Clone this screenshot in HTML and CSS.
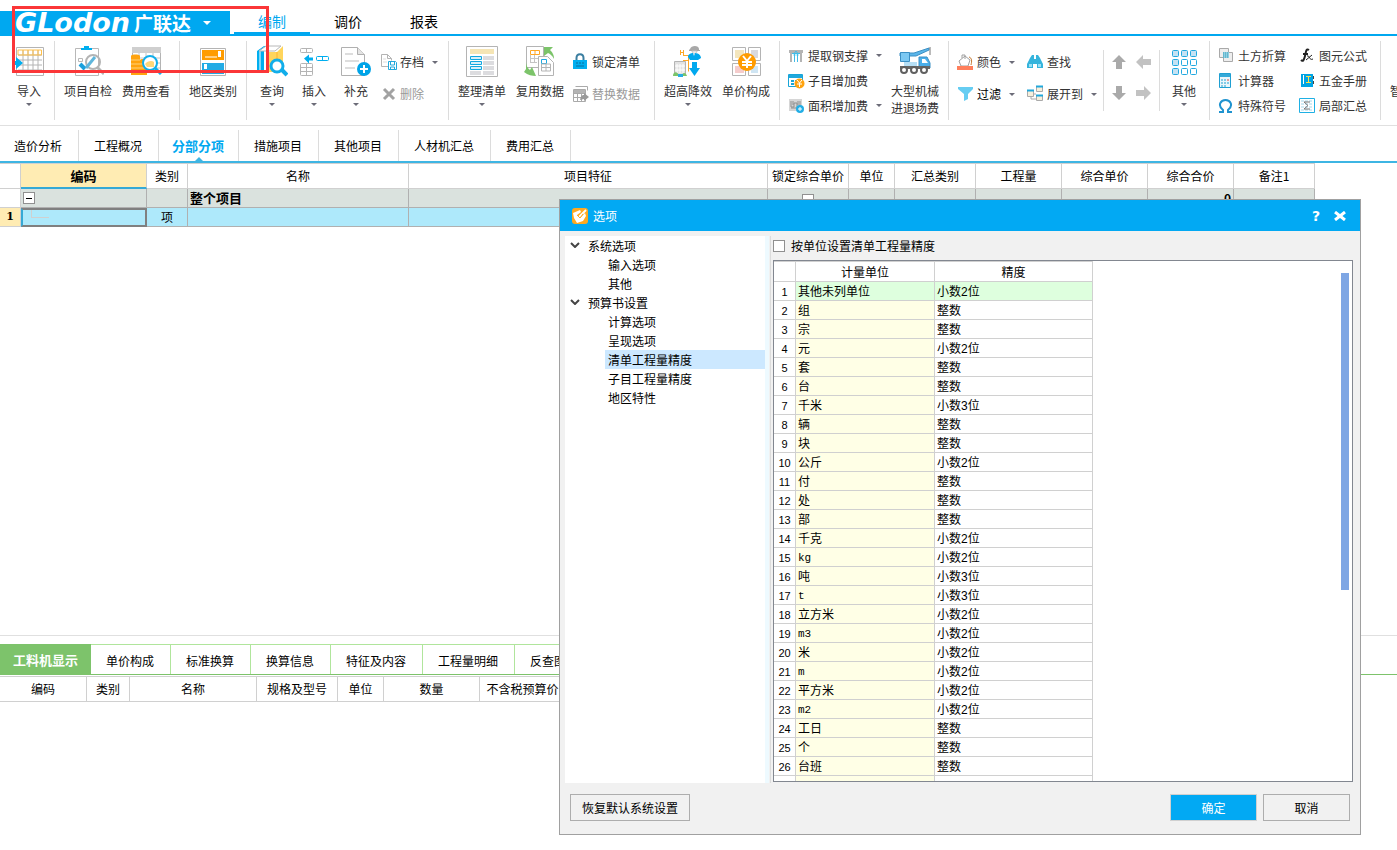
FILE: index.html
```
<!DOCTYPE html>
<html lang="zh-CN">

<head>
    <meta charset="UTF-8">
    <meta name="viewport" content="width=device-width, initial-scale=1.0">
    <title>广联达计价</title>
    <link rel="stylesheet" href="styles.css">
</head>

<body>
    <header class="titlebar">
        <button class="logo"><span class="logo-en">GLodon</span><span class="logo-cn">广联达</span><i class="arrow white"></i></button>
        <nav class="menu">
            <a href="#" class="on">编制</a>
            <a href="#">调价</a>
            <a href="#">报表</a>
        </nav>
    </header>

    <div class="ribbon">
        <div class="group first">
            <button class="big narrow">
                <svg width="32" height="32" viewBox="0 0 32 32" fill="none">
                    <path d="M3.500 2.500h27v28h-27z" stroke="#b4b4b4" fill="#fff" />
                    <path d="M5 10h24M5 15h24M5 20h24M5 25h24M10 5v23M15 5v23M20 5v23M25 5v23" stroke="#b4b4b4" />
                    <path d="M5 5h23.500v5H5zM10 5v5M15 5v5M20 5v5M25 5v5" stroke="#ffc04a" />
                    <path d="M0 16h3v-4l7 6-7 6v-4H0z" fill="#00aeef" />
                </svg>
                <span>导入</span><i class="arrow"></i>
            </button>
        </div>
        <div class="group">
            <button class="big">
                <svg width="32" height="32" viewBox="0 0 32 32" fill="none">
                    <path d="M3.500 3.500h23v27h-23z" stroke="#b8b8b8" fill="#fff" />
                    <path d="M9 5V3h3V1h5v2h3v2z" fill="#00aeef" />
                    <circle cx="21" cy="17" r="7" stroke="#b4b4b4" stroke-width="2" />
                    <path d="M25 22l7 7" stroke="#b4b4b4" stroke-width="3" />
                    <path d="M6.500 13.500h4v3h-4z" stroke="#b8b8b8" />
                    <path d="M8 19l5 5" stroke="#1a9fdc" stroke-width="4" />
                    <path d="M14 23l9-11" stroke="#5fb6dc" stroke-width="3" />
                </svg>
                <span>项目自检</span>
            </button>
            <button class="big">
                <svg width="32" height="32" viewBox="0 0 32 32" fill="none">
                    <path d="M2.500 2.500h28v24h-28z" stroke="#b4b4b4" fill="#fff" />
                    <path d="M2 2h29v6H2z" fill="#cfcfcf" />
                    <path d="M3 13h27M3 18h27M3 23h27M9 8v18M16 8v18M23 8v18" stroke="#c4c4c4" />
                    <path d="M1 11c0-2 9-2 9 0v4c1-2 7-1 7 1v14H1z" fill="#ffa30f" />
                    <path d="M1 15h9M1 19h16M1 23h16M1 27h16" stroke="#ffd27a" />
                    <circle cx="20" cy="18" r="7" fill="#fff" stroke="#12aeea" stroke-width="2" />
                    <path d="M15 19c2-3 7-4 9-2v5h-7z" fill="#ffd679" />
                    <path d="M25 23l6 6" stroke="#12aeea" stroke-width="3" />
                </svg>
                <span>费用查看</span>
            </button>
        </div>
        <div class="group">
            <button class="big">
                <svg width="32" height="32" viewBox="0 0 32 32" fill="none">
                    <path d="M3.500 3.500h25v27h-25z" stroke="#b4b4b4" fill="#fff" />
                    <path d="M5 5h22v10H5z" fill="#ff9c00" />
                    <path d="M5 18h22v11H5z" fill="#22abe5" />
                    <path d="M8 12h12M12 26h12" stroke="#fff" />
                    <path d="M21 6h3v6h-3zM7 19h3v5H7z" fill="#fff" />
                </svg>
                <span>地区类别</span>
            </button>
        </div>
        <div class="group">
            <button class="big narrow">
                <svg width="32" height="32" viewBox="0 0 32 32" fill="none">
                    <path d="M1 6l7-5h4l-4 5v20H1z" fill="#00aeef" />
                    <path d="M4 6v19" stroke="#fff" />
                    <path d="M3 6l7-5h15l-6 5z" fill="#fff" stroke="#b8b8b8" />
                    <path d="M11 7h10l6-6v20l-6 6H11z" fill="#ffd55c" />
                    <path d="M21 7v20" stroke="#ffb52e" />
                    <circle cx="21" cy="21" r="6" fill="#fff" stroke="#12aeea" stroke-width="3" />
                    <path d="M26 25l5 5" stroke="#12aeea" stroke-width="4" />
                </svg>
                <span>查询</span><i class="arrow"></i>
            </button>
            <button class="big narrow">
                <svg width="32" height="32" viewBox="0 0 32 32" fill="none">
                    <rect x="2.500" y="3.500" width="12" height="4" rx="1" stroke="#b4b4b4" />
                    <path d="M8.500 4v4" stroke="#b4b4b4" />
                    <rect x="2.500" y="18.500" width="12" height="12" rx="1" stroke="#b4b4b4" />
                    <path d="M8.500 18v13M2 22.500h12M2 26.500h12" stroke="#b4b4b4" />
                    <path d="M6 13.500l5-4v3h4v3h-4v3z" fill="#00aeef" />
                    <rect x="18.500" y="11.500" width="12" height="4" rx="1" stroke="#00aeef" />
                    <path d="M24.500 12v4" stroke="#00aeef" />
                </svg>
                <span>插入</span><i class="arrow"></i>
            </button>
            <button class="big narrow">
                <svg width="32" height="32" viewBox="0 0 32 32" fill="none">
                    <path d="M1.500 2.500h16l7 7v21h-23z" stroke="#b0b0b0" fill="#fff" />
                    <path d="M17.500 2.500v7h7" stroke="#b0b0b0" fill="#e4e4e4" />
                    <path d="M5 9h8M5 16h14M5 23h10" stroke="#ddd" stroke-width="2" />
                    <circle cx="24" cy="24" r="7" fill="#00a4e8" />
                    <path d="M24 20v8M20 24h8" stroke="#fff" stroke-width="2" />
                </svg>
                <span>补充</span><i class="arrow"></i>
            </button>
            <div class="col save">
                <button class="small">
                    <svg width="18" height="18" viewBox="0 0 18 18" fill="none">
                        <path d="M9 13.500H1.500v-12h6l4 4v2M7.500 1.500v4h4" stroke="#b4b4b4" />
                        <path d="M3 6h3M3 9h4" stroke="#ddd" />
                        <path d="M8.500 8.500h7l1 1v7h-8zM10.500 9v3h4V9M10.500 16v-2h4v2" stroke="#22a9dd" />
                    </svg>
                    <span>存档</span><i class="arrow"></i>
                </button>
                <button class="small" disabled>
                    <svg width="18" height="18" viewBox="0 0 18 18">
                        <path d="M4 4l10 10M14 4L4 14" stroke="#a2a2a2" stroke-width="3" />
                    </svg>
                    <span>删除</span>
                </button>
            </div>
        </div>
        <div class="group">
            <button class="big">
                <svg width="32" height="32" viewBox="0 0 32 32" fill="none">
                    <path d="M0.500 1.500h31v30h-31z" stroke="#b4b4b4" fill="#fff" />
                    <path d="M4 4h24v5H4z" fill="#f5e5b5" />
                    <path d="M17 11h11v4H17zM17 16h11v4H17zM17 21h11v4H17zM17 26h11v4H17zM4 26h11v4H4z" fill="#dcdcdf" />
                    <path d="M4.500 11.500h11v3h-11zM4.500 16.500h11v3h-11zM4.500 21.500h11v3h-11z" stroke="#12a8e0" fill="#d8eef8" />
                </svg>
                <span>整理清单</span><i class="arrow"></i>
            </button>
            <button class="big">
                <svg width="32" height="32" viewBox="0 0 32 32" fill="none">
                    <path d="M2.500 1.500h17v21h-17z" stroke="#b4b4b4" fill="#fff" />
                    <path d="M6.500 5.500h9v4h-9zM11 5v5" stroke="#ffa827" />
                    <path d="M6 13.500h8M6 17.500h7M6.500 10v8M10.500 10v8" stroke="#c4c4c4" />
                    <path d="M14.500 11.500h9l6 6v13h-15z" stroke="#b4b4b4" fill="#fff" />
                    <path d="M17.500 14.500h5v4h-5z" stroke="#22a9e0" />
                    <path d="M17.500 19v7h9v-7zM17 22.500h9M22 19v7" stroke="#b4b4b4" />
                    <path d="M20 2h9l-3 3c3 3 4 5 4 9-2-4-4-5-6-6l-4 3zM2 16v8l-2 3c4 3 8 4 12 4l-4-9-2 3c-3-2-4-5-4-9z" fill="#7cc46a" />
                </svg>
                <span>复用数据</span>
            </button>
            <div class="col lock">
                <button class="small">
                    <svg width="18" height="18" viewBox="0 0 18 18" fill="none">
                        <path d="M4.500 8V5c0-5 7-5 7 0v3" stroke="#3b7ea0" stroke-width="2" />
                        <path d="M1 7h14v9H1z" fill="#00aeef" />
                        <path d="M4 10h2M7 10h2M10 10h2M4 13h8" stroke="#0a6f9c" />
                    </svg>
                    <span>锁定清单</span>
                </button>
                <button class="small" disabled>
                    <svg width="18" height="18" viewBox="0 0 18 18" fill="none">
                        <path d="M3.500 1.500h12v4M1.500 4.500h12v12h-12zM1 8.500h13M1 12.500h12M5.500 7v10M9.500 7v10" stroke="#aaa" />
                        <path d="M2 5h11v3H2z" fill="#b4b4b4" />
                        <path d="M8 15c1-5 3-5 4-5V8l5 4-5 4v-2z" fill="#999" />
                    </svg>
                    <span>替换数据</span>
                </button>
            </div>
        </div>
        <div class="group">
            <button class="big">
                <svg width="32" height="32" viewBox="0 0 32 32" fill="none">
                    <path d="M8.500 5v5M11.500 5v5M8 7.500h3M11 10.500h5.500v16M11 15.500h5" stroke="#ffa827" />
                    <path d="M2.500 16.500h11v14h-11z" stroke="#b4b4b4" fill="#e2e2e2" />
                    <path d="M5 19v9M8 19v9M11 19v9M3 21h10M3 25h10" stroke="#fff" />
                    <path d="M1 31c0-5 5-5 6 0M10 31c0-4 4-4 5 0" fill="#7cc46a" />
                    <path d="M6 29h5v3H6z" fill="#2aaee4" />
                    <path d="M18 4c1-4 9-4 9 0v1h1v1H17V5z" fill="#a8a8a8" />
                    <path d="M20 6h5c0 3-5 3-5 0z" fill="#fff" stroke="#c0c0c0" />
                    <path d="M16 12c0-3 3-4 5-4l1 3 1-3c4 0 6 3 6 5l-3 2h-8z" fill="#00a8ee" />
                    <path d="M20 17h5v6h3l-5.500 8L17 23h3z" fill="#00a8ee" />
                </svg>
                <span>超高降效</span><i class="arrow"></i>
            </button>
            <button class="big">
                <svg width="32" height="32" viewBox="0 0 32 32" fill="none">
                    <path d="M2.500 2.500h13v13h-13zM18.500 2.500h12v13h-12zM2.500 18.500h13v12h-13zM18.500 18.500h12v12h-12z" stroke="#b4b4b4" fill="#fff" />
                    <path d="M5 5h9v8H5z" fill="#f4e6bd" />
                    <path d="M21 5h7v8h-7z" fill="#d9d9de" />
                    <path d="M5 21h9v7H5z" fill="#f5cccc" />
                    <path d="M21 21h7v7h-7z" fill="#cfe5f3" />
                    <circle cx="17" cy="17" r="9" fill="#ff9c00" />
                    <path d="M13 11l4 5 4-5M17 16v7M12 17h10M12 20h10" stroke="#fff" stroke-width="2" />
                </svg>
                <span>单价构成</span>
            </button>
        </div>
        <div class="group">
            <div class="col three fees">
                <button class="small">
                    <svg width="18" height="18" viewBox="0 0 18 18" fill="none">
                        <path d="M1 3h14v3h-1v9h-2V6H4v9H2V6H1z" fill="#b4b4b4" />
                        <path d="M5 6h6v3H5z" fill="#c8eefa" />
                        <path d="M6.500 15V6l1.500-2 1.500 2v9M4 6.500h8" stroke="#42bce8" />
                    </svg>
                    <span>提取钢支撑</span><i class="arrow"></i>
                </button>
                <button class="small">
                    <svg width="18" height="18" viewBox="0 0 18 18" fill="none">
                        <path d="M.5 2.500h14v12H.5z" stroke="#18a5d8" fill="#fff" />
                        <path d="M1 3h13v3H1z" fill="#20a8dc" />
                        <path d="M3 9h3M7 9h3M3 12h3" stroke="#18a5d8" stroke-width="2" />
                        <circle cx="11.500" cy="11.500" r="5" fill="#ffa30f" />
                        <path d="M9 8l2.500 3L14 8M11.500 11v4M9 12h5" stroke="#fff" />
                    </svg>
                    <span>子目增加费</span>
                </button>
                <button class="small">
                    <svg width="18" height="18" viewBox="0 0 18 18" fill="none">
                        <path d="M1 2h13v12H1z" fill="#d6d6d6" />
                        <path d="M3 4v6h3V6h3v4h3V4M3 11h8M5 4v4M10 4v4" stroke="#8e8e8e" />
                        <circle cx="12" cy="12" r="4" fill="#22aee6" />
                        <path d="M12 10v4M10 12h4" stroke="#fff" />
                    </svg>
                    <span>面积增加费</span><i class="arrow"></i>
                </button>
            </div>
            <button class="big">
                <svg width="32" height="32" viewBox="0 0 32 32" fill="none">
                    <path d="M1 8h14l15-5v2L17 11H1z" fill="#5ab6ea" stroke="#3b8fc4" />
                    <path d="M1.500 7.500h9v9h-9z" fill="#7cc8f2" stroke="#3b8fc4" />
                    <path d="M31 2v8" stroke="#777" />
                    <path d="M20 12h8l3 6v5H20z" fill="#4aaeea" stroke="#3b8fc4" />
                    <path d="M23 14h3l3 4h-6z" fill="#fff" />
                    <path d="M5 17h13v4H5z" fill="#b6dff5" />
                    <path d="M1 21h30v3H1z" fill="#666" />
                    <circle cx="5" cy="25" r="3" fill="#fff" stroke="#606060" stroke-width="2" />
                    <circle cx="15" cy="25" r="3" fill="#fff" stroke="#606060" stroke-width="2" />
                    <circle cx="25" cy="25" r="3" fill="#fff" stroke="#606060" stroke-width="2" />
                </svg>
                <span>大型机械<br>进退场费</span>
            </button>
        </div>
        <div class="group">
            <div class="col color">
                <button class="small">
                    <svg width="18" height="18" viewBox="0 0 18 18" fill="none">
                        <path d="M2 8l6-5 5 4-2 6H4z" stroke="#a0a0a0" fill="#fff" />
                        <path d="M5 5V2h3v4" stroke="#a0a0a0" />
                        <path d="M12 4c3 1 3 4 2 8" stroke="#c5762c" />
                        <path d="M0 13h16v4H0z" fill="#ff7f5c" />
                    </svg>
                    <span>颜色</span><i class="arrow"></i>
                </button>
                <button class="small dark">
                    <svg width="18" height="18" viewBox="0 0 18 18">
                        <path d="M1 2h15v2l-5 5v5l-4 2V9L1 4z" fill="#66cdf2" />
                    </svg>
                    <span>过滤</span><i class="arrow"></i>
                </button>
            </div>
            <div class="col find">
                <button class="small">
                    <svg width="18" height="18" viewBox="0 0 18 18">
                        <path d="M3 5l2-3h2v4h2V2h2l2 3 3 6v4h-6v-4H6v4H0v-4z" fill="#35b4dc" />
                        <path d="M2 11h3v3H2zM11 11h3v3h-3z" fill="#9be0f5" />
                    </svg>
                    <span>查找</span>
                </button>
                <button class="small">
                    <svg width="18" height="18" viewBox="0 0 18 18" fill="none">
                        <path d="M.5 5.500h6v6h-6zM9.500 1.500h6v5h-6zM9.500 10.500h6v5h-6z" stroke="#aaa" fill="#f6efdc" />
                        <path d="M0 5.500h7M9 1.500h7M9 10.500h7" stroke="#20a8dc" stroke-width="2" />
                        <path d="M7 9h2M4 12v2h5" stroke="#aaa" />
                    </svg>
                    <span>展开到</span><i class="arrow"></i>
                </button>
            </div>
            <div class="moves">
                <button aria-label="上移"><svg width="16" height="16" viewBox="0 0 16 16"><path d="M8 1l7 7h-4v7H5V8H1z" fill="#aaa" /></svg></button>
                <button aria-label="升级"><svg width="16" height="16" viewBox="0 0 16 16"><path d="M0 8l7-7v4h8v6H7v4z" fill="#c2c2c2" /></svg></button>
                <button aria-label="下移"><svg width="16" height="16" viewBox="0 0 16 16"><path d="M8 15l7-7h-4V1H5v7H1z" fill="#aaa" /></svg></button>
                <button aria-label="降级"><svg width="16" height="16" viewBox="0 0 16 16"><path d="M15 8L8 1v4H0v6h8v4z" fill="#c2c2c2" /></svg></button>
            </div>
            <button class="big narrow">
                <svg width="32" height="32" viewBox="0 0 32 32" fill="#fff" stroke="#22a9e0">
                    <g fill="#c5e2f3">
                        <rect x="4.500" y="5.500" width="6" height="6" rx="1" />
                        <rect x="13.500" y="5.500" width="6" height="6" rx="1" />
                        <rect x="22.500" y="5.500" width="6" height="6" rx="1" />
                        <rect x="4.500" y="14.500" width="6" height="6" rx="1" />
                        <rect x="4.500" y="23.500" width="6" height="6" rx="1" />
                    </g>
                    <rect x="13.500" y="14.500" width="6" height="6" rx="1" />
                    <rect x="22.500" y="14.500" width="6" height="6" rx="1" />
                    <rect x="13.500" y="23.500" width="6" height="6" rx="1" />
                    <rect x="22.500" y="23.500" width="6" height="6" rx="1" />
                </svg>
                <span>其他</span><i class="arrow"></i>
            </button>
        </div>
        <div class="group">
            <div class="col three tools">
                <button class="small">
                    <svg width="18" height="18" viewBox="0 0 18 18" fill="none">
                        <path d="M1.500 1.500h9v9h-9zM5.500 5.500h9v9h-9z" stroke="#a9a9a9" fill="#eee" />
                        <path d="M5 5h6v6H5z" fill="#8fd0e2" />
                        <path d="M5 6h6M5 8h6M5 10h6" stroke="#3b9dba" stroke-dasharray="1 1" />
                    </svg>
                    <span>土方折算</span>
                </button>
                <button class="small">
                    <svg width="18" height="18" viewBox="0 0 18 18" fill="none">
                        <path d="M1.500 1.500h11v14h-11z" stroke="#1f9fd2" fill="#eaf6fb" />
                        <path d="M2 2h10v3H2z" fill="#35a9d8" />
                        <path d="M3 8h2M6 8h2M3 11h2M6 11h2M9 11h2M3 14h2M6 14h2" stroke="#1f9fd2" />
                        <path d="M9 8h2" stroke="#e64040" />
                    </svg>
                    <span>计算器</span>
                </button>
                <button class="small">
                    <svg width="18" height="18" viewBox="0 0 18 18" fill="none">
                        <path d="M1 15h4v-2C-1 8 3 3 7.500 3S16 8 10 13v2h4" stroke="#1f93cf" stroke-width="2" />
                    </svg>
                    <span>特殊符号</span>
                </button>
            </div>
            <div class="col three tools">
                <button class="small">
                    <svg width="18" height="18" viewBox="0 0 18 18" fill="none" stroke="#222">
                        <path d="M10 3c-3-2-3 2-4 6s-2 6-4 4M4 7h5" stroke-width="2" />
                        <path d="M8 9c3-1 2 5 6 3M13 8l-6 5" />
                    </svg>
                    <span>图元公式</span>
                </button>
                <button class="small">
                    <svg width="18" height="18" viewBox="0 0 18 18" fill="none">
                        <path d="M2 2h12v13H2z" fill="#00a4e4" />
                        <path d="M4.500 3v9" stroke="#fff" />
                        <path d="M7 4.500h5M7 10.500h5M9.500 5v5" stroke="#ffe14a" />
                        <path d="M14 4h1v3h-1zM14 9h1v3h-1z" fill="#444" />
                    </svg>
                    <span>五金手册</span>
                </button>
                <button class="small">
                    <svg width="18" height="18" viewBox="0 0 18 18" fill="none">
                        <path d="M.5 1.500h15v14H.5z" stroke="#1fb0e4" fill="#fff" />
                        <path d="M2 4h12M2 7h12M2 10h12M2 13h12" stroke="#a4d8ea" stroke-dasharray="3 1" />
                        <path d="M11 5H5l4 3.500L5 12h6" stroke="#777" />
                    </svg>
                    <span>局部汇总</span>
                </button>
            </div>
        </div>
        <div class="group">
            <button class="big">
                <svg width="32" height="32" viewBox="0 0 32 32"></svg>
                <span>智能组价</span>
            </button>
        </div>
    </div>

    <nav class="tabs">
        <a href="#">造价分析</a>
        <a href="#">工程概况</a>
        <a href="#" class="on">分部分项</a>
        <a href="#">措施项目</a>
        <a href="#">其他项目</a>
        <a href="#">人材机汇总</a>
        <a href="#">费用汇总</a>
    </nav>

    <main>
        <table class="grid">
            <colgroup>
                <col class="w21"><col class="w126"><col class="w41"><col class="w221"><col class="w359"><col class="w81">
                <col class="w46"><col class="w81"><col class="w86"><col class="w86"><col class="w86"><col class="w81">
            </colgroup>
            <tr>
                <th></th>
                <th class="cur">编码</th>
                <th>类别</th>
                <th>名称</th>
                <th>项目特征</th>
                <th>锁定综合单价</th>
                <th>单位</th>
                <th>汇总类别</th>
                <th>工程量</th>
                <th>综合单价</th>
                <th>综合合价</th>
                <th>备注1</th>
            </tr>
            <tr class="total">
                <td class="num"></td>
                <td class="code"><button class="fold" aria-label="折叠"></button></td>
                <td></td>
                <td class="name">整个项目</td>
                <td></td>
                <td class="center"><input type="checkbox" aria-label="锁定综合单价"></td>
                <td></td>
                <td></td>
                <td></td>
                <td></td>
                <td class="sum">0</td>
                <td></td>
            </tr>
            <tr class="item">
                <td class="num cur">1</td>
                <td class="code edit"><i class="branch"></i></td>
                <td class="center">项</td>
                <td></td>
                <td></td>
                <td></td>
                <td></td>
                <td></td>
                <td></td>
                <td></td>
                <td></td>
                <td></td>
            </tr>
        </table>
    </main>

    <section class="detail">
        <nav class="subtabs">
            <a href="#" class="on">工料机显示</a>
            <a href="#">单价构成</a>
            <a href="#">标准换算</a>
            <a href="#">换算信息</a>
            <a href="#">特征及内容</a>
            <a href="#">工程量明细</a>
            <a href="#">反查图形</a>
        </nav>
        <table class="grid sub">
            <colgroup>
                <col class="w87"><col class="w43"><col class="w127"><col class="w81"><col class="w46"><col class="w96"><col class="w86">
            </colgroup>
            <tr>
                <th>编码</th>
                <th>类别</th>
                <th>名称</th>
                <th>规格及型号</th>
                <th>单位</th>
                <th>数量</th>
                <th>不含税预算价</th>
            </tr>
        </table>
    </section>

    <div class="dialog" role="dialog" aria-label="选项">
        <div class="dialog-title">
            <svg width="16" height="16" viewBox="0 0 16 16" fill="none">
                <rect width="16" height="16" rx="3" fill="#ffa91f" />
                <path d="M1 5l7-3 1 2-4 3 3 3 5-5 1 3-3 5-6 2-3-5z" fill="#fff" />
                <path d="M7 9l7-7" stroke="#fff" stroke-width="2" />
                <path d="M5 7l3 3 3-4" stroke="#ffa91f" />
            </svg>
            <span>选项</span>
            <button class="help" aria-label="帮助">?</button>
            <button aria-label="关闭">
                <svg width="12" height="10" viewBox="0 0 12 10"><path d="M1 1l10 8M11 1L1 9" stroke="#fff" stroke-width="3" /></svg>
            </button>
        </div>
        <div class="dialog-main">
            <ul class="tree">
                <li><svg width="10" height="6" viewBox="0 0 10 6" fill="none"><path d="M1 1l4 4 4-4" stroke="#444" stroke-width="2" /></svg>系统选项
                    <ul>
                        <li>输入选项</li>
                        <li>其他</li>
                    </ul>
                </li>
                <li><svg width="10" height="6" viewBox="0 0 10 6" fill="none"><path d="M1 1l4 4 4-4" stroke="#444" stroke-width="2" /></svg>预算书设置
                    <ul>
                        <li>计算选项</li>
                        <li>呈现选项</li>
                        <li class="on">清单工程量精度</li>
                        <li>子目工程量精度</li>
                        <li>地区特性</li>
                    </ul>
                </li>
            </ul>
            <div class="panel">
                <label class="check"><input type="checkbox">按单位设置清单工程量精度</label>
                <div class="list">
                    <table class="units">
                        <colgroup><col class="w22"><col class="w139"><col class="w158"></colgroup>
                        <tr><th></th><th>计量单位</th><th>精度</th></tr>
                        <tr class="on"><td>1</td><td>其他未列单位</td><td>小数2位</td></tr>
                        <tr><td>2</td><td>组</td><td>整数</td></tr>
                        <tr><td>3</td><td>宗</td><td>整数</td></tr>
                        <tr><td>4</td><td>元</td><td>小数2位</td></tr>
                        <tr><td>5</td><td>套</td><td>整数</td></tr>
                        <tr><td>6</td><td>台</td><td>整数</td></tr>
                        <tr><td>7</td><td>千米</td><td>小数3位</td></tr>
                        <tr><td>8</td><td>辆</td><td>整数</td></tr>
                        <tr><td>9</td><td>块</td><td>整数</td></tr>
                        <tr><td>10</td><td>公斤</td><td>小数2位</td></tr>
                        <tr><td>11</td><td>付</td><td>整数</td></tr>
                        <tr><td>12</td><td>处</td><td>整数</td></tr>
                        <tr><td>13</td><td>部</td><td>整数</td></tr>
                        <tr><td>14</td><td>千克</td><td>小数2位</td></tr>
                        <tr><td>15</td><td class="en">kg</td><td>小数2位</td></tr>
                        <tr><td>16</td><td>吨</td><td>小数3位</td></tr>
                        <tr><td>17</td><td class="en">t</td><td>小数3位</td></tr>
                        <tr><td>18</td><td>立方米</td><td>小数2位</td></tr>
                        <tr><td>19</td><td class="en">m3</td><td>小数2位</td></tr>
                        <tr><td>20</td><td>米</td><td>小数2位</td></tr>
                        <tr><td>21</td><td class="en">m</td><td>小数2位</td></tr>
                        <tr><td>22</td><td>平方米</td><td>小数2位</td></tr>
                        <tr><td>23</td><td class="en">m2</td><td>小数2位</td></tr>
                        <tr><td>24</td><td>工日</td><td>整数</td></tr>
                        <tr><td>25</td><td>个</td><td>整数</td></tr>
                        <tr><td>26</td><td>台班</td><td>整数</td></tr>
                        <tr><td></td><td></td><td></td></tr>
                    </table>
                    <div class="thumb"></div>
                </div>
            </div>
        </div>
        <div class="dialog-foot">
            <button class="btn reset">恢复默认系统设置</button>
            <button class="btn ok">确定</button>
            <button class="btn">取消</button>
        </div>
    </div>

    <div class="mark"></div>
</body>

</html>
```
FILE: styles.css
```
* {
    margin: 0;
    padding: 0;
    box-sizing: border-box;
}

body {
    display: flex;
    flex-direction: column;
    height: 100vh;
    overflow: hidden;
    position: relative;
    background: #fff;
    color: #000;
    font: 12px/18px "Noto Sans CJK SC", sans-serif;
}

button {
    border: none;
    background: none;
    color: inherit;
    font: inherit;
}

a {
    color: #000;
    text-decoration: none;
    white-space: nowrap;
}

svg {
    display: block;
    flex: none;
}

ul {
    list-style: none;
}

.arrow {
    flex: none;
    border: 3px solid transparent;
    border-top-color: #6c6c78;
    border-bottom: none;
}

.arrow.white {
    border-width: 4px;
    border-top-color: #fff;
    border-bottom: none;
    margin-left: 12px;
}

/* 标题栏 */
.titlebar {
    flex: none;
    display: flex;
    padding-top: 11px;
    height: 36px;
    border-bottom: 2px solid #00a8f0;
}

.logo {
    display: flex;
    align-items: center;
    width: 230px;
    height: 23px;
    padding-left: 15px;
    background: #00a8f0;
    color: #fff;
    font-weight: bold;
}

.logo-en {
    font: italic bold 27px/23px "DejaVu Sans", sans-serif;
}

.logo-cn {
    margin-left: 4px;
    font-size: 19px;
    line-height: 23px;
}

.menu {
    display: flex;
    margin-left: 4px;
}

.menu a {
    width: 76px;
    text-align: center;
    font-size: 14px;
    line-height: 21px;
    border-bottom: 2px solid transparent;
}

.menu .on {
    color: #00a8f0;
    border-color: #00a8f0;
}

/* 功能区 */
.ribbon {
    flex: none;
    display: flex;
    height: 90px;
    padding: 5px 0;
    overflow: hidden;
    border-bottom: 1px solid #e0e0e0;
    color: #333;
}

.group {
    flex: none;
    display: flex;
    align-items: flex-start;
    padding: 0 4px;
    border-right: 1px solid #dcdcdc;
}

.group.first {
    padding-left: 8px;
}

.big {
    display: flex;
    flex-direction: column;
    align-items: center;
    width: 58px;
    padding-top: 4px;
    white-space: nowrap;
}

.narrow {
    width: 42px;
}

.big span {
    margin: 5px 0 4px;
    line-height: 17px;
}

.col {
    padding: 5px 0 0 3px;
}

.small {
    display: flex;
    align-items: center;
    gap: 2px;
    height: 32px;
    white-space: nowrap;
}

.small .arrow {
    margin-left: 6px;
}

.small:disabled {
    color: #999;
}

.small.dark {
    color: #000;
}

.three {
    padding: 2px 0 0 4px;
}

.three .small {
    height: 25px;
}

.save {
    width: 67px;
}

.lock {
    width: 81px;
}

.fees {
    width: 102px;
}

.color {
    width: 70px;
    padding-left: 4px;
}

.find {
    width: 80px;
    padding-left: 4px;
}

.tools {
    width: 81px;
}

.moves {
    display: grid;
    grid-template-columns: 25px 25px;
    justify-content: center;
    align-content: space-between;
    width: 57px;
    height: 61px;
    margin: 9px 3px 0 0;
    padding: 4px 0 10px;
    border: solid #dcdcdc;
    border-width: 0 1px;
}

.moves button {
    display: flex;
    justify-content: center;
}

/* 页签 */
.tabs {
    flex: none;
    display: flex;
    height: 37px;
    padding-top: 4px;
    border-bottom: 2px solid #3eb5e3;
}

.tabs a {
    padding: 0 16px 0 15px;
    border-right: 1px solid #dcdcdc;
    line-height: 32px;
}

.tabs a:first-child {
    padding-left: 14px;
}

.tabs .on {
    position: relative;
    padding: 0 14px 0 13px;
    color: #00a8f0;
    font-size: 13px;
    font-weight: bold;
}

.tabs .on::after {
    content: "";
    position: absolute;
    left: 50%;
    bottom: 0;
    margin-left: -4px;
    border: 4px solid transparent;
    border-top: none;
    border-bottom-color: #3eb5e3;
}

/* 表格 */
main {
    flex: 1;
    overflow: hidden;
}

.grid,
.units {
    table-layout: fixed;
    width: 0;
    border-spacing: 0;
    line-height: 16px;
    white-space: nowrap;
}

.grid th {
    height: 26px;
    border: solid #d0d0d0;
    border-width: 1px 1px 1px 0;
    font-weight: normal;
}

.grid .cur {
    background: #ffecb3;
    font-weight: bold;
}

.grid th.cur {
    border-bottom: 2px solid #35a9d6;
    font-size: 13px;
}

.grid td {
    height: 19px;
    border: solid #b0b0b0;
    border-width: 0 1px 1px 0;
    overflow: hidden;
}

.total td {
    background: #dae2de;
}

.grid .num {
    border-color: #d0d0d0;
    text-align: center;
    font-family: "DejaVu Serif", serif;
    font-size: 11px;
}

.total .num {
    background: #fff;
}

.grid .name {
    padding-left: 2px;
    font-size: 13px;
    font-weight: bold;
}

.grid .sum {
    padding-right: 2px;
    text-align: right;
    font-weight: bold;
}

.center {
    text-align: center;
}

.item td {
    background: #aee9fb;
}

.fold {
    display: block;
    width: 12px;
    height: 12px;
    margin-left: 2px;
    padding: 0 2px;
    border: 1px solid #909090;
    background: #fff;
}

.fold::before {
    content: "";
    display: block;
    height: 1px;
    background: #000;
}

.item .edit {
    border: 2px solid #808080;
    border-left-color: #35a9d6;
}

.branch {
    display: block;
    width: 18px;
    height: 8px;
    margin: 0 0 7px 8px;
    border: solid #d0d0d0;
    border-width: 0 0 1px 1px;
}

input[type="checkbox"] {
    appearance: none;
    width: 12px;
    height: 12px;
    border: 1px solid #909090;
    background: #fff;
    vertical-align: middle;
}

.w21 { width: 21px; }
.w22 { width: 22px; }
.w41 { width: 41px; }
.w43 { width: 43px; }
.w46 { width: 46px; }
.w81 { width: 81px; }
.w86 { width: 86px; }
.w87 { width: 87px; }
.w96 { width: 96px; }
.w126 { width: 126px; }
.w127 { width: 127px; }
.w139 { width: 139px; }
.w158 { width: 158px; }
.w221 { width: 221px; }
.w359 { width: 359px; }

/* 下方明细 */
.detail {
    flex: none;
    height: 215px;
    padding-top: 8px;
    border-top: 1px solid #e0e0e0;
}

.subtabs {
    display: flex;
    height: 31px;
    margin-bottom: 1px;
    border-bottom: 1px solid #7dc36b;
}

.subtabs a {
    padding: 0 16px 0 15px;
    border: solid #b0e59c;
    border-width: 1px 1px 0 0;
    line-height: 32px;
}

.subtabs .on {
    padding: 0 13px;
    border: none;
    background: #7dc36b;
    color: #fff;
    font-size: 13px;
    font-weight: bold;
}

/* 选项窗口 */
.dialog {
    position: absolute;
    left: 559px;
    top: 199px;
    width: 802px;
    border: 1px solid #a0a0a0;
    background: #f1f1f1;
}

.dialog-title {
    display: flex;
    align-items: center;
    gap: 5px;
    height: 31px;
    padding: 0 14px 0 12px;
    background: #02a9f3;
    color: #fff;
}

.dialog-title .help {
    margin: 0 9px 0 auto;
    font: bold 14px/18px "DejaVu Sans", sans-serif;
}

.dialog-main {
    display: flex;
    padding: 5px 7px 0 5px;
}

.tree {
    width: 204px;
    border-right: 4px solid #eefaff;
    background: #fff;
    line-height: 19px;
}

.tree > li {
    padding-left: 23px;
}

.tree svg {
    float: left;
    margin: 6px 0 0 -18px;
}

.tree li li {
    margin-left: 17px;
    padding-left: 3px;
}

.tree .on {
    background: #cce8ff;
}

.panel {
    flex: 1;
    margin-left: 1px;
    padding: 0 0 1px 2px;
    border-left: 1px solid #dcdcdc;
}

.check {
    display: flex;
    align-items: center;
    gap: 6px;
    height: 20px;
    margin-bottom: 4px;
}

.list {
    position: relative;
    height: 522px;
    overflow: hidden;
    border: 1px solid #828790;
    background: #fff;
}

.units th {
    height: 21px;
    border: solid #d0d0d0;
    border-width: 1px 1px 1px 0;
    font-weight: normal;
}

.units td {
    height: 19px;
    padding: 3px 0 0 2px;
    border: solid #d0d0d0;
    border-width: 0 1px 1px 0;
    font-family: "Liberation Sans", "Noto Sans CJK SC", sans-serif;
    line-height: 15px;
}

.units td:first-child {
    padding-left: 0;
    text-align: center;
    font-size: 11px;
}

.units td:nth-child(2) {
    background: #ffffe6;
}

.units .on td:not(:first-child) {
    background: #deffde;
}

.units .en {
    font-family: "Liberation Mono", monospace;
    font-size: 11px;
}

.thumb {
    position: absolute;
    top: 12px;
    right: 3px;
    width: 8px;
    height: 317px;
    background: #7ea6e4;
}

.dialog-foot {
    display: flex;
    gap: 6px;
    padding: 11px 10px 13px;
}

.btn {
    width: 87px;
    height: 27px;
    border: 1px solid #adadad;
}

.reset {
    width: 120px;
    margin-right: auto;
}

.ok {
    border-color: #d0d0d0;
    background: #02a9f3;
    color: #fff;
}

/* 红框标注 */
.mark {
    position: absolute;
    left: 12px;
    top: 6px;
    width: 257px;
    height: 67px;
    border: 3px solid #fb3638;
}
```
